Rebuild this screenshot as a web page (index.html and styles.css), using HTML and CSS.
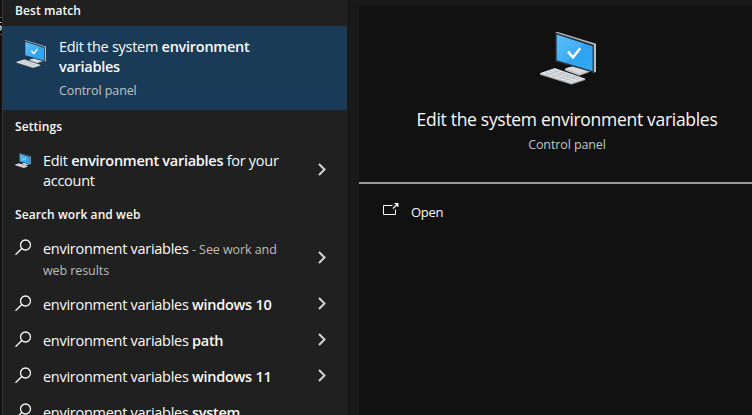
FILE: index.html
```html
<!DOCTYPE html>
<html lang="en">
<head>
<meta charset="utf-8">
<title>Search</title>
<link rel="stylesheet" href="styles.css">
</head>
<body>
<svg class="defs" width="0" height="0" aria-hidden="true">
  <linearGradient id="screen" x1="0" y1="0" x2="1" y2="1">
    <stop offset="0" stop-color="#5bbcf8"/><stop offset=".5" stop-color="#41aef6"/><stop offset=".52" stop-color="#2ea1f0"/><stop offset="1" stop-color="#36a9f4"/>
  </linearGradient>
  <symbol id="computer" viewBox="0 0 58 54">
    <path d="M26 37.5 37 34.500 51 38.500V41L40 45 25 39.500z" fill="#bcc2c6"/>
    <path d="M26 37.500 37 35 51 39 40 43z" fill="#d9dde0"/>
    <path d="M15.500 1 18 0.500 57 12.500V41L54.500 42z" fill="#b9bec3"/>
    <path d="M15.500 1 54.800 13.500V42L15.500 30.500z" fill="#26323c"/>
    <path d="M17 3.200 53.500 15V40.200L17 29.300z" fill="url(#screen)"/>
    <path d="M28.500 20.500 33.500 26.500 41 17" fill="none" stroke="#fff" stroke-width="2.500"/>
    <path d="M0 42.500 15 37.500 46 48V49.500L32 54 0 44z" fill="#aeb5ba"/>
    <path d="M0 42.500 15 37.500 46 48 32 52.500z" fill="#e2e5e7"/>
    <path d="M5 41.500 35 51M9 40 39 49.500M13 39 42 48.500M7 44 19 40M13 46 25 42M19 48 31 44M25 50 37 46" fill="none" stroke="#b5bbc0" stroke-width=".8"/>
  </symbol>
  <symbol id="search" viewBox="0 0 17 17">
    <circle cx="10.500" cy="6" r="5" fill="none" stroke="currentColor" stroke-width="1.300"/>
    <path d="M6.800 9.500.5 15.700" fill="none" stroke="currentColor" stroke-width="1.300"/>
  </symbol>
  <symbol id="chevron" viewBox="0 0 8 13">
    <path d="M1 1 6.500 6.500 1 12" fill="none" stroke="currentColor" stroke-width="2"/>
  </symbol>
</svg>
<div class="window">
  <div class="behind"><span>5</span></div>
  <main class="results">
    <h2 class="heading heading-best">Best match</h2>
    <div class="best">
      <svg class="best-icon"><use href="#computer"/></svg>
      <div>
        <div class="title">Edit the system <b>environment</b><br><b>variables</b></div>
        <div class="sub">Control panel</div>
      </div>
    </div>
    <h2 class="heading heading-settings">Settings</h2>
    <div class="row row-settings">
      <svg class="small-icon"><use href="#computer"/></svg>
      <div class="title">Edit <b>environment variables</b> for your<br>account</div>
      <svg class="chevron"><use href="#chevron"/></svg>
    </div>
    <h2 class="heading heading-web">Search work and web</h2>
    <div class="row row-web">
      <svg class="search"><use href="#search"/></svg>
      <div class="title">environment variables <span class="hint">- See work and<br>web results</span></div>
      <svg class="chevron"><use href="#chevron"/></svg>
    </div>
    <div class="row">
      <svg class="search"><use href="#search"/></svg>
      <div class="title">environment variables <b>windows 10</b></div>
      <svg class="chevron"><use href="#chevron"/></svg>
    </div>
    <div class="row">
      <svg class="search"><use href="#search"/></svg>
      <div class="title">environment variables <b>path</b></div>
      <svg class="chevron"><use href="#chevron"/></svg>
    </div>
    <div class="row">
      <svg class="search"><use href="#search"/></svg>
      <div class="title">environment variables <b>windows 11</b></div>
      <svg class="chevron"><use href="#chevron"/></svg>
    </div>
    <div class="row">
      <svg class="search"><use href="#search"/></svg>
      <div class="title">environment variables <b>system</b></div>
    </div>
  </main>
  <aside class="preview">
    <div class="hero">
      <svg class="hero-icon"><use href="#computer"/></svg>
      <div class="hero-title">Edit the system environment variables</div>
      <div class="sub hero-sub">Control panel</div>
    </div>
    <div class="action">
      <svg class="open-icon" viewBox="0 0 16 12"><path d="M9.500 2.500H.500V11.500H12.500V6.500" fill="none" stroke="currentColor"/><path d="M10 5.500 14.500 1M11.500.600H14.900V4" fill="none" stroke="currentColor" stroke-width="1.100"/></svg>
      <span>Open</span>
    </div>
  </aside>
</div>
</body>
</html>
```

FILE: styles.css
```css
* { box-sizing: border-box; }
body { margin: 0; overflow: hidden; background: #191919; color: #fafafa; font-family: "Open Sans", "Noto Sans", sans-serif; }
svg { display: block; flex: none; }
.defs { position: absolute; }
b { font-weight: 600; }
.window { display: flex; width: 752px; height: 415px; overflow: hidden; }
.behind { width: 3px; background: #111; border-right: 1px solid #34363a; padding-top: 17px; overflow: hidden; }
.behind span { display: block; height: 18px; margin-left: -5px; border: solid #555; border-width: 1px 0; background: #000; font-size: 13px; line-height: 16px; }
.results { width: 344px; height: 415px; overflow: hidden; background: #202020; }
.heading { margin: 0; padding-left: 12px; font-size: 12px; line-height: 20px; letter-spacing: .08px; font-weight: 600; white-space: nowrap; }
.heading-best { height: 26px; padding-top: 1px; }
.best { display: flex; height: 84px; padding: 11px 0 0 13px; background: #193b58; }
.best-icon { width: 31px; height: 28px; margin: 3px 12px 0 0; }
.title { font-size: 14.5px; line-height: 20px; letter-spacing: -.28px; white-space: nowrap; }
.sub { color: #c0c4c8; font-size: 12.5px; line-height: 18px; letter-spacing: -.1px; }
.best .sub { margin-top: 5px; }
.heading-settings { padding-top: 7px; height: 34px; }
.row { display: flex; height: 36px; padding: 8px 21px 0 12px; }
.row .title { flex: 1; }
.row-settings { height: 60px; padding-top: 7px; }
.small-icon { width: 16px; height: 15px; margin: 2px 12px 0 0; }
.heading-web { height: 26px; padding-top: 1px; }
.row-web { height: 57px; padding-top: 9px; }
.search { width: 17px; height: 17px; margin-right: 11px; }
.chevron { width: 8px; height: 13px; margin-top: 2px; color: #d5d5d5; }
.row-settings .chevron, .row-web .chevron { margin-top: 12px; }
.hint { color: #bdbdbd; font-size: 12.5px; letter-spacing: -.08px; }
.preview { width: 393px; margin: 6px 0 0 12px; background: #111; }
.hero { display: flex; flex-direction: column; align-items: center; height: 178px; padding: 25px 0 0 23px; border-bottom: 2px solid #999; }
.hero-icon { width: 57px; height: 54px; margin-left: 2px; }
.hero-title { margin-top: 21px; font-size: 17.5px; line-height: 26px; letter-spacing: -.3px; white-space: nowrap; }
.hero-sub { margin-top: 4px; }
.action { display: flex; padding: 18px 0 0 24px; font-size: 13px; line-height: 20px; letter-spacing: -.3px; }
.open-icon { width: 16px; height: 12px; margin: 1px 12px 0 0; }
```
